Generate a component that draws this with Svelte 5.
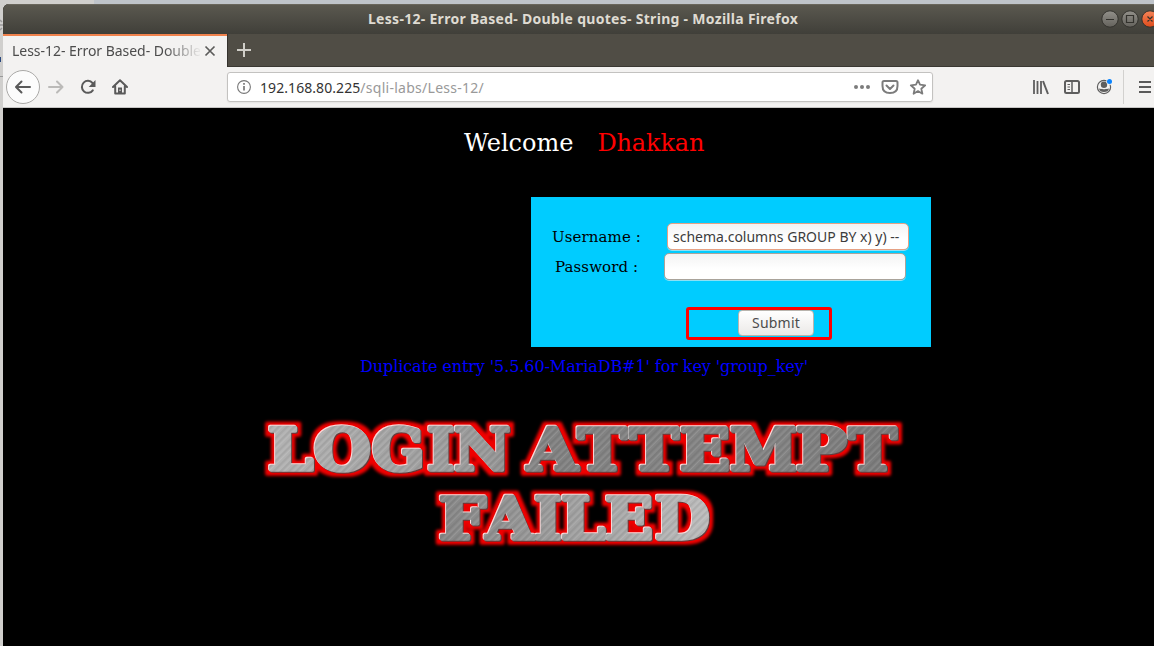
<script>
  import { onMount } from 'svelte';

  const bannerRows = [
    { top: 425, glyphs: [['L', 268, 314], ['O', 314, 370], ['G', 372, 422], ['I', 427, 454], ['N', 454, 510], ['A', 524, 580], ['T', 576, 628], ['T', 628, 680], ['E', 680, 729], ['M', 730, 796], ['P', 796, 847], ['T', 847, 898]] },
    { top: 494, glyphs: [['F', 439, 487], ['A', 483, 536], ['I', 534, 561], ['L', 561, 606], ['E', 605, 652], ['D', 655, 709]] }
  ];

  let letters = $state([]);

  onMount(() => {
    const ctx = document.createElement('canvas').getContext('2d');
    ctx.font = 'bold 100px "DejaVu Serif"';
    letters = bannerRows.flatMap((row) =>
      row.glyphs.map(([ch, x1, x2]) => {
        const m = ctx.measureText(ch);
        const sx = (x2 - x1 - 4) / (m.actualBoundingBoxLeft + m.actualBoundingBoxRight);
        const sy = 42.5 / 72.9;
        const x = x1 + 2.5 + m.actualBoundingBoxLeft * sx;
        return { ch, t: `matrix(${sx} 0 0 ${sy} ${x - 260} ${row.top + 44.5 - 410})` };
      })
    );
  });
</script>

<div class="desktop">
  <svg class="behind" width="3" height="110" viewBox="0 0 3 110"><path d="M0 20l2 2M0 25h3M0 30l2-2" stroke="#999" stroke-width="1.500" /><rect y="57" width="1" height="5" fill="#29477d" /><path d="M0 76.500h3" stroke="#999" /></svg>
  <div class="window">
    <header class="titlebar">
      <span class="title">Less-12- Error Based- Double quotes- String - Mozilla Firefox</span>
      <svg class="controls" width="60" height="30" viewBox="0 0 60 30">
        <defs>
          <linearGradient id="grey" x2="0" y2="1"><stop stop-color="#92908a" /><stop offset="1" stop-color="#64625c" /></linearGradient>
          <linearGradient id="orange" x2="0" y2="1"><stop stop-color="#f58458" /><stop offset="1" stop-color="#df4c1c" /></linearGradient>
        </defs>
        <g stroke="#33322d" stroke-width="1">
          <circle cx="16" cy="15" r="8.2" fill="url(#grey)" />
          <circle cx="36" cy="15" r="8.2" fill="url(#grey)" />
          <circle cx="56" cy="15" r="8.2" fill="url(#orange)" />
          <path d="M12 15.5h8M32.5 11.5h7v7h-7zM53.5 12.5l5 5M58.500 12.5l-5 5" fill="none" stroke-width="1.2" />
        </g>
      </svg>
    </header>

    <div class="tabs">
      <div class="tab">
        <span class="tab-label">Less-12- Error Based- Double</span>
        <svg class="close" width="12" height="12" viewBox="0 0 12 12"><path d="M1.500 1.500l9 9M10.500 1.500l-9 9" stroke="#5c5c5b" stroke-width="1.7" /></svg>
      </div>
      <svg class="plus" width="14" height="14" viewBox="0 0 14 14"><path d="M7 0v14M0 7h14" stroke="#d0cec8" stroke-width="2" /></svg>
    </div>

    <nav class="toolbar">
      <div class="back">
        <svg width="18" height="16" viewBox="0 0 18 16"><path d="M16 8H2.500M7.500 2.500L2 8l5.500 5.500" fill="none" stroke="#5a5a5a" stroke-width="2" stroke-linecap="round" stroke-linejoin="round" /></svg>
      </div>
      <svg class="forward" width="18" height="16" viewBox="0 0 18 16"><path d="M2 8h13.500M10 2.500L15.500 8 10 13.500" fill="none" stroke="#bbbab8" stroke-width="2" stroke-linecap="round" stroke-linejoin="round" /></svg>
      <svg class="reload" width="16" height="16" viewBox="0 0 16 16"><path d="M12.800 11.300A6 6 0 1 1 12.500 4" fill="none" stroke="#5a5a5a" stroke-width="2" stroke-linecap="round" /><path d="M15.500 1v7H8.700z" fill="#5a5a5a" /></svg>
      <svg class="home" width="16" height="16" viewBox="0 0 16 16"><path d="M1 8l7-6.700L15 8M3.200 7.500v7h9.600v-7" fill="none" stroke="#5a5a5a" stroke-width="2" stroke-linecap="round" stroke-linejoin="round" /><path d="M6 8.500h4v6H6z" fill="#5a5a5a" /><path d="M7.500 10.500h1v1.500h-1z" fill="#f3f2f1" /></svg>
      <div class="urlbar">
        <svg width="14" height="14" viewBox="0 0 14 14"><circle cx="7" cy="7" r="6.400" fill="none" stroke="#777" stroke-width="1.1" /><path d="M7 6v4.500M7 3v1.700" stroke="#777" stroke-width="1.7" /></svg>
        <span class="url"><b>192.168.80.225</b>/sqli-labs/Less-12/</span>
        <svg class="page-actions" width="74" height="16" viewBox="0 0 74 16" fill="none" stroke="#7c7c7c">
          <g fill="#7c7c7c" stroke="none"><circle cx="3" cy="8" r="2" /><circle cx="9" cy="8" r="2" /><circle cx="15" cy="8" r="2" /></g>
          <path d="M31 2h12q1.500 0 1.500 1.500v3.500q0 7-7.500 7t-7.500-7V3.500Q29.500 2 31 2z" stroke-width="2" /><path d="M33.500 6.500L37 10l3.500-3.500" stroke-width="2" stroke-linecap="round" stroke-linejoin="round" />
          <path d="M65 1.200l2 4.500 5.200.6-3.900 3.400 1.100 5L65 12.100l-4.400 2.600 1.100-5-3.900-3.400 5.200-.6z" stroke-width="1.8" stroke-linejoin="round" />
        </svg>
      </div>
      <svg class="tools" width="80" height="18" viewBox="0 0 80 18" fill="none" stroke="#5e5e5e">
        <path d="M2 2v14M5.500 3v13M9 3v13" stroke-width="1.800" /><path d="M11 3l5 13" stroke-width="2" />
        <rect x="33" y="3" width="14" height="12" rx="1.500" stroke-width="2" /><path d="M40 3v12" stroke-width="1.500" /><path d="M35.500 6.500h2.500M35.500 9h2.500M35.500 11.500h2.500" stroke-width="1" />
        <circle cx="72" cy="9" r="6.600" stroke-width="1.200" /><circle cx="72" cy="6.700" r="3.200" fill="#5e5e5e" stroke="none" /><path d="M67 10.500q2 .8 3 .2 2 1.200 4 0 1 .6 3-.2-.5 3.500-5 3.500t-5-3.500z" fill="#5e5e5e" stroke="none" />
        <circle cx="77.500" cy="3.600" r="3.200" fill="#f3f2f1" stroke="none" /><circle cx="77.500" cy="3.600" r="2.500" fill="#0a84ff" stroke="none" />
      </svg>
      <span class="divider"></span>
      <svg class="burger" width="12" height="14" viewBox="0 0 12 14"><path d="M0 2h12M0 7h12M0 12h12" stroke="#5a5a5a" stroke-width="2" /></svg>
    </nav>

    <main class="page">
      <div class="welcome"><span>Welcome</span><span class="name">Dhakkan</span></div>
      <form class="login" onsubmit={(e) => e.preventDefault()}>
        <label class="row user"><span>Username :</span><input value="schema.columns GROUP BY x) y) --" /></label>
        <label class="row pass"><span>Password :</span><input type="password" /></label>
        <div class="highlight"><button>Submit</button></div>
      </form>
      <p class="error">Duplicate entry '5.5.60-MariaDB#1' for key 'group_key'</p>
      <svg class="banner" width="650" height="145" viewBox="0 0 650 145">
        <defs>
          <linearGradient id="steel" gradientUnits="userSpaceOnUse" x1="0" y1="0" x2="650" y2="0">
            <stop stop-color="#b4b4b4" /><stop offset=".35" stop-color="#999" /><stop offset=".44" stop-color="#828282" /><stop offset=".75" stop-color="#858585" /><stop offset="1" stop-color="#7a7a7a" />
          </linearGradient>
          <linearGradient id="steel2" gradientUnits="userSpaceOnUse" x1="175" y1="0" x2="450" y2="0">
            <stop stop-color="#858585" /><stop offset="1" stop-color="#bcbcbc" />
          </linearGradient>
          <pattern id="brush" width="11" height="11" patternUnits="userSpaceOnUse" patternTransform="rotate(45)">
            <path d="M1 0v11M5.500 0v11" stroke="#fff" stroke-opacity=".2" stroke-width=".6" /><path d="M3 0v11M9 0v11" stroke="#000" stroke-opacity=".2" stroke-width=".6" />
          </pattern>
          <filter id="glow" filterUnits="userSpaceOnUse" x="0" y="0" width="650" height="145" color-interpolation-filters="sRGB">
            <feMorphology in="SourceAlpha" operator="dilate" radius="4" result="fat" />
            <feGaussianBlur in="fat" stdDeviation="1.700" result="soft" />
            <feFlood flood-color="#f00000" /><feComposite in2="soft" operator="in" result="red" />
            <feOffset in="SourceAlpha" dx="-0.600" dy="-0.600" result="up" /><feFlood flood-color="#fff" flood-opacity=".85" /><feComposite in2="up" operator="in" result="white" />
            <feOffset in="SourceAlpha" dx="0.800" dy="0.800" result="down" /><feFlood flood-color="#663b3b" /><feComposite in2="down" operator="in" result="dark" />
            <feMerge><feMergeNode in="red" /><feMergeNode in="dark" /><feMergeNode in="white" /><feMergeNode in="SourceGraphic" /></feMerge>
          </filter>
          <mask id="shape" maskUnits="userSpaceOnUse" x="0" y="0" width="650" height="145">
            <g fill="#fff" stroke="#fff" stroke-width="6" stroke-linejoin="round" class="slab">
              {#each letters as l}<text transform={l.t}>{l.ch}</text>{/each}
            </g>
          </mask>
        </defs>
        <g filter="url(#glow)">
          <g mask="url(#shape)">
            <rect width="650" height="73" fill="url(#steel)" /><rect y="73" width="650" height="72" fill="url(#steel2)" />
            <rect width="650" height="145" fill="url(#brush)" />
          </g>
        </g>
      </svg>
    </main>
  </div>
</div>

<style>
  :global(body) { margin: 0; overflow: hidden; }
  .desktop { position: relative; box-sizing: border-box; width: 1154px; height: 646px; padding: 4px 0 0 3px; background: linear-gradient(90deg, #d0cfcd 94px, #bfc4ca 94px); overflow: hidden; font-family: "Noto Sans", sans-serif; }
  .behind { position: absolute; left: 0; top: 0; }
  .window { width: 1151px; height: 642px; background: #000; border-radius: 6px 0 0; overflow: hidden; display: flex; flex-direction: column; }
  .titlebar { height: 30px; flex: none; display: flex; align-items: center; background: linear-gradient(#5b5950, #403f39); box-shadow: inset 0 1px #69665c; }
  .title { width: 1091px; padding: 0 0 2px 365px; box-sizing: border-box; font-size: 14px; font-weight: 700; color: #dfdbd2; white-space: nowrap; letter-spacing: .29px; }
  .tabs { height: 33px; flex: none; display: flex; align-items: center; background: #504d45; box-shadow: inset 0 -1px #3a3832; }
  .tab { box-sizing: border-box; width: 224px; height: 33px; display: flex; align-items: center; gap: 4px; padding-left: 9px; background: #f3f2f1; border-top: 2px solid #f0824d; box-shadow: 1px 0 #34322d; }
  .tab-label { width: 188px; padding-bottom: 2px; overflow: hidden; white-space: nowrap; font-size: 14px; color: #4c4c4c; letter-spacing: -.04px; mask-image: linear-gradient(90deg, #000 152px, transparent 190px); }
  .close { margin-bottom: 1px; }
  .plus { margin-left: 10px; margin-top: -2px; }
  .toolbar { height: 41px; flex: none; box-sizing: border-box; display: flex; align-items: center; background: #f3f2f1; border-bottom: 1px solid #c6c5c4; }
  .back { box-sizing: border-box; width: 34px; height: 34px; margin-left: 3px; border: 1px solid #aaa9a7; border-radius: 50%; background: #fcfcfc; display: grid; place-items: center; }
  .forward { margin-left: 7px; }
  .reload { margin-left: 15px; }
  .home { margin-left: 16px; }
  .urlbar { box-sizing: border-box; width: 706px; height: 30px; margin-left: 99px; padding: 0 5px 0 9px; border: 1px solid #c3c2c0; border-radius: 3px; background: #fff; display: flex; align-items: center; box-shadow: 0 1px 2px #0001; }
  .url { margin-left: 9px; font-size: 14px; color: #999; letter-spacing: .27px; }
  .url b { font-weight: 400; color: #333; letter-spacing: .07px; }
  .page-actions { margin-left: auto; }
  .tools { margin-left: 99px; }
  .divider { width: 1px; height: 34px; margin-left: 11px; background: #d2d1cf; }
  .burger { margin-left: 15px; }
  .page { flex: 1; font-family: "DejaVu Serif", serif; }
  .welcome { display: flex; gap: 24px; padding: 21px 0 0 461px; font-size: 24px; line-height: 28px; color: #fff; }
  .name { color: #f00; letter-spacing: -.15px; }
  .login { box-sizing: border-box; width: 400px; height: 150px; margin: 40px 0 0 528px; padding-top: 26px; background: #0cf; font-size: 15px; color: #000; }
  .row { display: flex; align-items: center; height: 28px; }
  .row span { white-space: nowrap; letter-spacing: .1px; }
  .user { padding-left: 21px; }
  .user span { width: 115px; }
  .pass { margin-top: 2px; padding-left: 24px; }
  .pass span { width: 109px; }
  input { box-sizing: border-box; width: 242px; height: 27px; margin-bottom: 1px; padding: 0 5px; border: 1px solid #aaa39a; border-radius: 5px; background: linear-gradient(#f3f3f3, #fff 60%); font: 14px "Noto Sans", sans-serif; color: #3c3c3c; outline: 0; box-shadow: 0 1px #8ce0f4; }
  .user input { border-color: #e5a184; }
  .highlight { box-sizing: border-box; width: 146px; height: 33px; margin: 26px 0 0 154.500px; border: 3px solid #f00; border-radius: 3px; padding-left: 49.500px; }
  button { box-sizing: border-box; display: block; width: 76px; height: 26px; padding: 0 0 1px; border: 1px solid #b9b4ad; border-radius: 4px; background: linear-gradient(#fff, #ebe9e7); font: 14px "Noto Sans", sans-serif; color: #4c4c4c; letter-spacing: .2px; }
  .error { margin: 10px 0 0 357px; font-size: 16px; line-height: 19px; color: #00f; white-space: nowrap; letter-spacing: -.08px; }
  .banner { display: block; margin: 34px 0 0 257px; }
  .slab { font: bold 100px "DejaVu Serif", serif; }
</style>
